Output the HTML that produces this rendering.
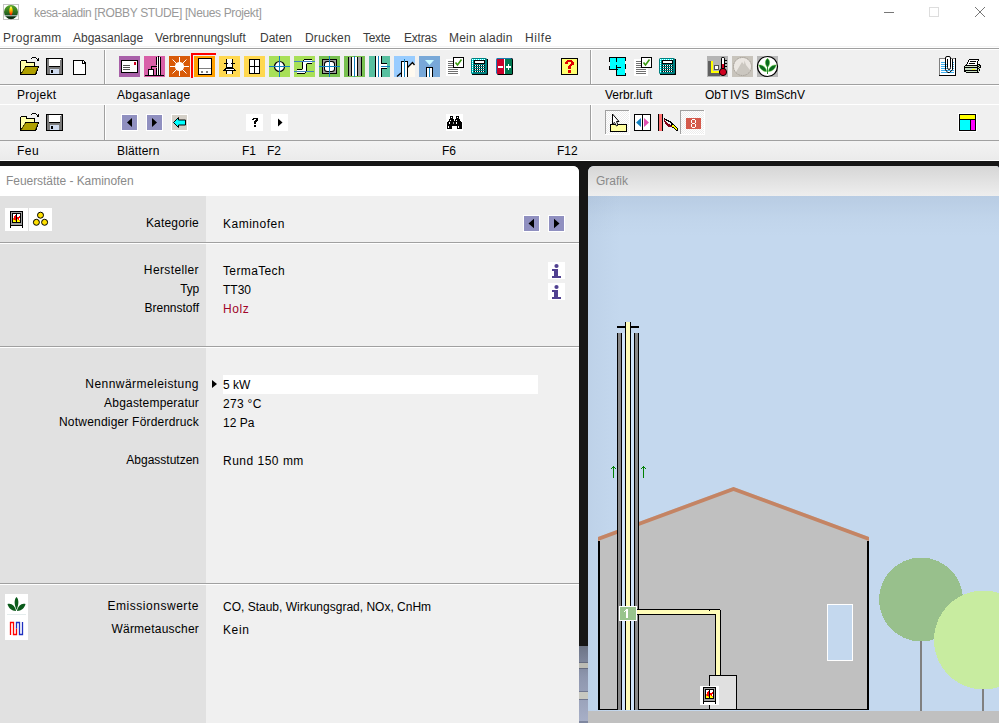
<!DOCTYPE html>
<html><head><meta charset="utf-8">
<style>
*{margin:0;padding:0;box-sizing:border-box}
html,body{width:999px;height:723px;overflow:hidden;background:#fff;font-family:"Liberation Sans",sans-serif;font-size:12px;color:#000}
.a{position:absolute}
.t{position:absolute;white-space:pre;line-height:14px;font-size:12px}
.hl{position:absolute;height:1px;background:#a0a0a0}
.wl{position:absolute;height:1px;background:#fff}
.vl{position:absolute;width:1px;background:#a0a0a0}
.lab{position:absolute;white-space:pre;right:800px;text-align:right;line-height:14px}
.val{position:absolute;white-space:pre;left:223px;line-height:14px}
svg{position:absolute;overflow:visible}
</style></head><body>
<!-- title bar -->
<div class="a" style="left:3px;top:4px;width:16px;height:16px;border:1px solid #c4c4c4;background:#fff"></div>
<svg style="left:4px;top:5px" width="14" height="14" viewBox="0 0 14 14">
<defs><linearGradient id="gg" x1="0" y1="0" x2="0" y2="1"><stop offset="0" stop-color="#5aa828"/><stop offset="0.7" stop-color="#1e5a1e"/></linearGradient>
<linearGradient id="fg" x1="0" y1="0" x2="0" y2="1"><stop offset="0" stop-color="#ffffa0"/><stop offset="0.35" stop-color="#ffe000"/><stop offset="0.65" stop-color="#ff8000"/><stop offset="1" stop-color="#ff0000"/></linearGradient></defs>
<circle cx="7" cy="7" r="7" fill="url(#gg)"/>
<path d="M0.8 10 H13.2 V11.6 H0.8Z" fill="#9aaca4"/>
<path d="M2 11.6 H12 Q10 14.2 7 14.2 Q4 14.2 2 11.6Z" fill="#0a2a12"/>
<path d="M7 1 C8.6 2.5 9 5 8.6 7.5 C8.4 9 7.6 10 7 10.3 C6.4 10 5.6 9 5.4 7.5 C5 5 5.4 2.5 7 1Z" fill="url(#fg)"/>
</svg>
<div class="t" style="left:34px;top:6px;color:#999;letter-spacing:-0.37px">kesa-aladin [ROBBY STUDE] [Neues Projekt]</div>
<div class="a" style="left:884px;top:12px;width:10px;height:1px;background:#777"></div>
<div class="a" style="left:929px;top:7px;width:10px;height:10px;border:1px solid #ddd"></div>
<svg style="left:975px;top:7px" width="10" height="10"><path d="M0 0L10 10M10 0L0 10" stroke="#777" stroke-width="1"/></svg>

<!-- menu -->
<div class="t" style="left:3px;top:31px;color:#3c3c3c;letter-spacing:0.33px">Programm</div>
<div class="t" style="left:73px;top:31px;color:#3c3c3c">Abgasanlage</div>
<div class="t" style="left:155px;top:31px;color:#3c3c3c">Verbrennungsluft</div>
<div class="t" style="left:260px;top:31px;color:#3c3c3c">Daten</div>
<div class="t" style="left:305px;top:31px;color:#3c3c3c;letter-spacing:0.15px">Drucken</div>
<div class="t" style="left:363px;top:31px;color:#3c3c3c;letter-spacing:-0.3px">Texte</div>
<div class="t" style="left:404px;top:31px;color:#3c3c3c;letter-spacing:-0.2px">Extras</div>
<div class="t" style="left:449px;top:31px;color:#3c3c3c;letter-spacing:0.2px">Mein aladin</div>
<div class="t" style="left:525px;top:31px;color:#3c3c3c;letter-spacing:0.6px">Hilfe</div>

<!-- toolbar area -->
<div class="a" style="left:0;top:46px;width:999px;height:1px;background:#f4f4f4"></div>
<div class="a" style="left:0;top:48px;width:999px;height:113px;background:#f0f0f0"></div>
<div class="hl" style="left:0;top:48px;width:999px"></div>
<div class="wl" style="left:0;top:49px;width:999px"></div>
<div class="hl" style="left:0;top:84px;width:999px"></div>
<div class="wl" style="left:0;top:85px;width:999px"></div>
<div class="wl" style="left:0;top:104px;width:999px"></div>
<div class="hl" style="left:0;top:140px;width:999px"></div>
<div class="a" style="left:0;top:141px;width:999px;height:19px;background:linear-gradient(#f3f3f3,#ebebeb)"></div>
<div class="wl" style="left:0;top:160px;width:999px"></div>
<div class="vl" style="left:104px;top:50px;height:34px"></div>
<div class="vl" style="left:590px;top:50px;height:34px"></div>
<div class="vl" style="left:104px;top:105px;height:35px"></div><div class="a" style="left:105px;top:105px;width:1px;height:35px;background:#fff"></div><div class="a" style="left:105px;top:50px;width:1px;height:34px;background:#fff"></div>
<div class="vl" style="left:590px;top:105px;height:35px"></div><div class="a" style="left:591px;top:105px;width:1px;height:35px;background:#fff"></div><div class="a" style="left:591px;top:50px;width:1px;height:34px;background:#fff"></div>

<div class="t" style="left:17px;top:88px;letter-spacing:0.3px">Projekt</div>
<div class="t" style="left:117px;top:88px;letter-spacing:0.3px">Abgasanlage</div>
<div class="t" style="left:605px;top:88px">Verbr.luft</div>
<div class="t" style="left:705px;top:88px">ObT</div><div class="t" style="left:730px;top:88px">IVS</div>
<div class="t" style="left:755px;top:88px">BImSchV</div>
<div class="t" style="left:17px;top:144px;letter-spacing:0.5px">Feu</div>
<div class="t" style="left:117px;top:144px;letter-spacing:0.15px">Blättern</div>
<div class="t" style="left:242px;top:144px">F1</div>
<div class="t" style="left:267px;top:144px">F2</div>
<div class="t" style="left:442px;top:144px">F6</div>
<div class="t" style="left:557px;top:144px">F12</div>


<!-- toolbar icons -->
<svg style="left:0;top:0" width="999" height="161" shape-rendering="crispEdges">
<!-- folder row1 -->
<g id="fold">
<path d="M20 61 H21 V60 H27 V62 H35 V66 H39 V67 L36 75 H20 Z" fill="#000"/>
<path d="M21 61 H26 V63 H34 V66 H25 V67 L21 73 Z" fill="#ffffa8"/>
<path d="M25 67 H38 L35 74 H21 Z" fill="#b0a000" shape-rendering="auto"/>
<path d="M25.5 67 L21 74" stroke="#000" stroke-width="1" stroke-dasharray="1 1" shape-rendering="auto"/>
<rect x="31" y="58" width="1" height="1" fill="#000"/><rect x="32" y="57" width="4" height="1" fill="#000"/><rect x="36" y="58" width="1" height="1" fill="#000"/>
<rect x="37" y="59" width="2" height="1" fill="#000"/><rect x="38" y="58" width="1" height="3" fill="#000"/><rect x="37" y="60" width="2" height="1" fill="#000"/>
</g>
<!-- floppy -->
<g id="flop">
<rect x="46" y="58" width="17" height="17" fill="#000"/>
<rect x="47" y="59" width="15" height="15" fill="#7a7a7a"/>
<rect x="49" y="59" width="11" height="7" fill="#fff"/>
<rect x="49" y="66" width="11" height="1" fill="#000"/>
<rect x="60" y="59" width="1" height="1" fill="#fff"/>
<rect x="50" y="69" width="9" height="5" fill="#d0dcf0"/>
<rect x="51" y="70" width="2" height="3" fill="#000"/>
</g>
<!-- new doc -->
<path d="M73 60 H83 L86 63 V75 H73 Z" fill="#000"/>
<path d="M74 61 H82 V64 H85 V74 H74 Z" fill="#fff"/>
<rect x="83" y="61" width="1" height="2" fill="#fff"/>
<!-- 1 purple envelope -->
<rect x="119" y="56" width="21" height="21" fill="#a860a8"/>
<rect x="121" y="60" width="17" height="13" fill="#000"/>
<rect x="122" y="61" width="15" height="11" fill="#fff"/>
<rect x="134" y="62" width="2" height="3" fill="#d00020"/>
<rect x="123" y="65" width="7" height="1" fill="#505050"/>
<rect x="123" y="67" width="7" height="1" fill="#505050"/>
<rect x="123" y="69" width="7" height="1" fill="#505050"/>
<!-- 2 pink stairs -->
<rect x="144" y="56" width="21" height="21" fill="#d860a8"/>
<rect x="145" y="75" width="19" height="1" fill="#000"/>
<rect x="148" y="69" width="6" height="7" fill="#000"/>
<rect x="149" y="70" width="4" height="5" fill="#fff"/>
<rect x="151" y="66" width="6" height="1" fill="#000"/>
<rect x="151" y="66" width="1" height="3" fill="#000"/>
<rect x="156" y="57" width="1" height="8" fill="#000"/>
<rect x="156" y="68" width="1" height="7" fill="#000"/>
<rect x="157" y="57" width="1" height="18" fill="#fff"/>
<rect x="158" y="56" width="1" height="19" fill="#000"/>
<rect x="159" y="57" width="1" height="18" fill="#fff"/>
<rect x="160" y="57" width="1" height="18" fill="#000"/>
<!-- 3 sun -->
<rect x="169" y="56" width="21" height="21" fill="#d85a08"/>
<g shape-rendering="auto" stroke="#fff" stroke-width="1">
<path d="M179.5 57 V76 M170 66.5 H189 M172.5 59.5 L186.5 73.5 M186.5 59.5 L172.5 73.5"/>
</g>
<circle cx="179.5" cy="66.5" r="4.6" fill="#fff" shape-rendering="auto"/>
<!-- 4 selected orange stove -->
<rect x="191" y="53" width="25" height="2" fill="#ff0000"/>
<rect x="191" y="53" width="2" height="25" fill="#ff0000"/>
<rect x="194" y="56" width="21" height="21" fill="#ffa000"/>
<rect x="198" y="58" width="14" height="17" fill="#000"/>
<rect x="199" y="59" width="12" height="15" fill="#fff"/>
<rect x="199" y="68" width="12" height="1" fill="#808080"/>
<rect x="201" y="71" width="2" height="2" fill="#808080"/>
<rect x="206" y="71" width="2" height="2" fill="#808080"/>
<!-- 5 yellow chimney joint -->
<rect x="219" y="56" width="21" height="21" fill="#ffd850"/>
<rect x="227" y="59" width="5" height="8" fill="#fff"/>
<rect x="226" y="59" width="1" height="9" fill="#000"/>
<rect x="232" y="59" width="1" height="9" fill="#000"/>
<rect x="226" y="67" width="7" height="1" fill="#000"/>
<rect x="224" y="63" width="4" height="1" fill="#000"/>
<rect x="231" y="63" width="4" height="1" fill="#000"/>
<path d="M225 68 H234 L236 71 H223 Z" fill="#000"/>
<path d="M226 69 H233 L234 70 H225 Z" fill="#fff"/>
<rect x="227" y="71" width="5" height="3" fill="#fff"/>
<rect x="226" y="71" width="1" height="3" fill="#000"/>
<rect x="232" y="71" width="1" height="3" fill="#000"/>
<!-- 6 yellow window -->
<rect x="244" y="56" width="21" height="21" fill="#ffd850"/>
<rect x="249" y="59" width="11" height="15" fill="#000"/>
<rect x="250" y="60" width="4" height="6" fill="#fff"/>
<rect x="255" y="60" width="4" height="6" fill="#fff"/>
<rect x="250" y="67" width="4" height="6" fill="#fff"/>
<rect x="255" y="67" width="4" height="6" fill="#fff"/>
<!-- 7 green crosshair circle -->
<rect x="269" y="56" width="21" height="21" fill="#a8e058"/>
<circle cx="279.5" cy="66.5" r="5" fill="#fff" stroke="#000" stroke-width="1.2" shape-rendering="auto"/>
<rect x="269" y="66" width="21" height="1" fill="#1080c0"/>
<rect x="279" y="56" width="1" height="21" fill="#1080c0"/>
<!-- 8 green S pipe -->
<rect x="294" y="56" width="21" height="21" fill="#a8e058"/>
<g fill="#fff"><rect x="304" y="60" width="8" height="3"/><rect x="303" y="61" width="3" height="10"/><rect x="297" y="70" width="8" height="3"/></g>
<g fill="#000">
<rect x="304" y="59" width="8" height="1"/><rect x="303" y="60" width="1" height="1"/>
<rect x="302" y="61" width="1" height="8"/><rect x="297" y="69" width="5" height="1"/>
<rect x="297" y="73" width="8" height="1"/><rect x="305" y="72" width="1" height="1"/>
<rect x="306" y="64" width="1" height="8"/><rect x="307" y="63" width="5" height="1"/>
</g>
<rect x="294" y="61" width="21" height="1" fill="#4080c0"/>
<rect x="294" y="71" width="20" height="1" fill="#4080c0"/>
<!-- 9 green square frame -->
<rect x="319" y="56" width="21" height="21" fill="#78c050"/>
<rect x="322" y="59" width="15" height="15" fill="#000"/>
<rect x="323" y="60" width="13" height="13" fill="#a0a0a0"/>
<rect x="324" y="61" width="11" height="11" rx="3" fill="#000" shape-rendering="auto"/>
<rect x="325" y="62" width="9" height="9" rx="2.5" fill="#fff" shape-rendering="auto"/>
<rect x="319" y="66" width="21" height="1" fill="#1080c0"/>
<rect x="329" y="56" width="1" height="21" fill="#1080c0"/>
<!-- 10 green stripes -->
<rect x="344" y="56" width="21" height="21" fill="#78c050"/>
<rect x="348" y="57" width="14" height="19" fill="#000"/>
<rect x="349" y="57" width="2" height="19" fill="#a0a0a0"/>
<rect x="352" y="57" width="5" height="19" fill="#fff"/>
<rect x="358" y="57" width="3" height="19" fill="#a0a0a0"/>
<rect x="354" y="56" width="1" height="21" fill="#1080c0"/>
<!-- 11 teal T -->
<rect x="369" y="56" width="21" height="21" fill="#58c0a0"/>
<rect x="375" y="56" width="7" height="21" fill="#000"/>
<rect x="376" y="56" width="5" height="21" fill="#fff"/>
<rect x="381" y="63" width="6" height="6" fill="#000"/>
<rect x="381" y="64" width="6" height="4" fill="#fff"/>
<rect x="378" y="56" width="1" height="21" fill="#1080c0"/>
<rect x="381" y="66" width="9" height="1" fill="#1080c0"/>
<!-- 12 light blue chimney roof -->
<rect x="394" y="56" width="21" height="21" fill="#98ccff"/>
<path d="M408 67 L413 62 L415 64 V77 H408 Z" fill="#fffaf0" shape-rendering="auto"/>
<path d="M407.5 67.5 L412.5 62.5 L414.5 65" fill="none" stroke="#000" stroke-width="1.3" shape-rendering="auto"/>
<path d="M397 76.5 L401 73" fill="none" stroke="#000" stroke-width="1.3" shape-rendering="auto"/>
<rect x="401" y="61" width="7" height="16" fill="#000"/>
<rect x="402" y="62" width="5" height="15" fill="#fff"/>
<rect x="404" y="59" width="1" height="18" fill="#1080c0"/>
<!-- 13 steel blue -->
<rect x="419" y="56" width="21" height="21" fill="#78a8d8"/>
<path d="M425 60 H434 L429.5 65 Z" fill="#c8f8ff" shape-rendering="auto"/>
<rect x="426" y="67" width="7" height="10" fill="#000"/>
<rect x="427" y="68" width="5" height="9" fill="#fff"/>
<rect x="429" y="68" width="1" height="9" fill="#1080c0"/>
<!-- 14 checklist -->
<rect x="446" y="59" width="14" height="17" fill="#fff"/>
<rect x="448" y="61" width="7" height="1" fill="#707070"/>
<rect x="448" y="63" width="7" height="1" fill="#707070"/>
<rect x="448" y="65" width="7" height="1" fill="#707070"/>
<rect x="448" y="67" width="7" height="1" fill="#707070"/>
<rect x="448" y="69" width="10" height="1" fill="#707070"/>
<rect x="448" y="71" width="10" height="1" fill="#707070"/>
<rect x="448" y="73" width="10" height="1" fill="#707070"/>
<rect x="453" y="57" width="11" height="11" fill="#000"/>
<rect x="454" y="58" width="9" height="9" fill="#fff"/>
<path d="M455.5 62.5 L457.5 65 L461.5 59.5" fill="none" stroke="#3a9a10" stroke-width="1.6" shape-rendering="auto"/>
<!-- 15 calculator -->
<rect x="472" y="59" width="16" height="16" fill="#000"/>
<rect x="471" y="58" width="16" height="16" rx="1.5" fill="#008080" shape-rendering="auto"/>
<rect x="472" y="59" width="13" height="1" fill="#00ffff"/><rect x="472" y="59" width="1" height="14" fill="#00ffff"/>
<rect x="472" y="59" width="1" height="1" fill="#fff"/>
<rect x="472" y="59" width="1" height="1" fill="#fff"/>
<rect x="474" y="59" width="1" height="1" fill="#fff"/>
<rect x="472" y="61" width="1" height="1" fill="#fff"/>
<rect x="476" y="59" width="1" height="1" fill="#fff"/>
<rect x="472" y="63" width="1" height="1" fill="#fff"/>
<rect x="478" y="59" width="1" height="1" fill="#fff"/>
<rect x="472" y="65" width="1" height="1" fill="#fff"/>
<rect x="480" y="59" width="1" height="1" fill="#fff"/>
<rect x="472" y="67" width="1" height="1" fill="#fff"/>
<rect x="482" y="59" width="1" height="1" fill="#fff"/>
<rect x="472" y="69" width="1" height="1" fill="#fff"/>
<rect x="484" y="59" width="1" height="1" fill="#fff"/>
<rect x="472" y="71" width="1" height="1" fill="#fff"/>
<rect x="474" y="60" width="11" height="4" fill="#000"/><rect x="475" y="61" width="9" height="2" fill="#fff"/>
<rect x="474" y="65" width="11" height="1" fill="#000"/>
<rect x="475" y="65" width="1" height="1" fill="#fff"/>
<rect x="477" y="65" width="1" height="1" fill="#fff"/>
<rect x="479" y="65" width="1" height="1" fill="#fff"/>
<rect x="481" y="65" width="1" height="1" fill="#fff"/>
<rect x="483" y="65" width="1" height="1" fill="#fff"/>
<rect x="474" y="67" width="11" height="1" fill="#000"/>
<rect x="475" y="67" width="1" height="1" fill="#fff"/>
<rect x="477" y="67" width="1" height="1" fill="#fff"/>
<rect x="479" y="67" width="1" height="1" fill="#fff"/>
<rect x="481" y="67" width="1" height="1" fill="#fff"/>
<rect x="483" y="67" width="1" height="1" fill="#fff"/>
<rect x="474" y="69" width="11" height="1" fill="#000"/>
<rect x="475" y="69" width="1" height="1" fill="#fff"/>
<rect x="477" y="69" width="1" height="1" fill="#fff"/>
<rect x="479" y="69" width="1" height="1" fill="#fff"/>
<rect x="481" y="69" width="1" height="1" fill="#fff"/>
<rect x="483" y="69" width="1" height="1" fill="#fff"/>
<rect x="474" y="71" width="11" height="1" fill="#000"/>
<rect x="475" y="71" width="1" height="1" fill="#fff"/>
<rect x="477" y="71" width="1" height="1" fill="#fff"/>
<rect x="479" y="71" width="1" height="1" fill="#fff"/>
<rect x="481" y="71" width="1" height="1" fill="#fff"/>
<rect x="483" y="71" width="1" height="1" fill="#fff"/>
<!-- 16 minus plus -->
<rect x="497" y="58" width="16" height="17" rx="1.5" fill="#000" shape-rendering="auto"/>
<rect x="496" y="58" width="16" height="16" rx="1.5" fill="#1a7ab0" shape-rendering="auto"/>
<rect x="497" y="59" width="7" height="15" fill="#c8002a"/>
<rect x="504" y="59" width="1" height="15" fill="#fff"/>
<rect x="505" y="59" width="7" height="15" fill="#007850"/>
<rect x="498" y="66" width="5" height="1.5" fill="#fff"/>
<rect x="506" y="66" width="5" height="1.5" fill="#fff"/>
<rect x="507.8" y="64" width="1.5" height="5.5" fill="#fff"/>
<!-- help -->
<rect x="561" y="58" width="17" height="17" fill="#000"/>
<rect x="562" y="59" width="15" height="15" fill="#ffff70"/>
<g fill="#e00000">
<rect x="567" y="60" width="5" height="1"/><rect x="566" y="61" width="7" height="1"/>
<rect x="565" y="62" width="3" height="2"/><rect x="571" y="62" width="3" height="2"/>
<rect x="570" y="64" width="4" height="1"/><rect x="569" y="65" width="3" height="1"/>
<rect x="568" y="66" width="3" height="3"/><rect x="568" y="70" width="3" height="3"/>
</g>
<!-- floor plan -->
<rect x="610" y="58" width="15" height="11" fill="#00ffff"/>
<rect x="617" y="58" width="8" height="17" fill="#00ffff"/>
<g fill="#000">
<rect x="609" y="57" width="17" height="1"/>
<rect x="609" y="57" width="1" height="5"/><rect x="609" y="66" width="1" height="4"/>
<rect x="609" y="69" width="9" height="1"/>
<rect x="625" y="57" width="1" height="4"/><rect x="625" y="64" width="1" height="5"/><rect x="625" y="73" width="1" height="3"/>
<rect x="616" y="75" width="10" height="1"/>
<rect x="616" y="69" width="1" height="7"/>
<rect x="616" y="57" width="1" height="5"/><rect x="616" y="65" width="1" height="5"/>
<rect x="617" y="67" width="4" height="1"/>
</g>
<rect x="617" y="68" width="1" height="1" fill="#00ffff"/>
<!-- checklist 2 -->
<rect x="634" y="59" width="14" height="17" fill="#fff"/>
<rect x="636" y="61" width="7" height="1" fill="#707070"/>
<rect x="636" y="63" width="7" height="1" fill="#707070"/>
<rect x="636" y="65" width="7" height="1" fill="#707070"/>
<rect x="636" y="67" width="7" height="1" fill="#707070"/>
<rect x="636" y="69" width="10" height="1" fill="#707070"/>
<rect x="636" y="71" width="10" height="1" fill="#707070"/>
<rect x="636" y="73" width="10" height="1" fill="#707070"/>
<rect x="641" y="57" width="11" height="11" fill="#000"/>
<rect x="642" y="58" width="9" height="9" fill="#fff"/>
<path d="M643.5 62.5 L645.5 65 L649.5 59.5" fill="none" stroke="#3a9a10" stroke-width="1.6" shape-rendering="auto"/>
<!-- calculator 2 -->
<rect x="660" y="59" width="16" height="16" fill="#000"/>
<rect x="659" y="58" width="16" height="16" rx="1.5" fill="#008080" shape-rendering="auto"/>
<rect x="660" y="59" width="13" height="1" fill="#00ffff"/><rect x="660" y="59" width="1" height="14" fill="#00ffff"/>
<rect x="660" y="59" width="1" height="1" fill="#fff"/>
<rect x="660" y="59" width="1" height="1" fill="#fff"/>
<rect x="662" y="59" width="1" height="1" fill="#fff"/>
<rect x="660" y="61" width="1" height="1" fill="#fff"/>
<rect x="664" y="59" width="1" height="1" fill="#fff"/>
<rect x="660" y="63" width="1" height="1" fill="#fff"/>
<rect x="666" y="59" width="1" height="1" fill="#fff"/>
<rect x="660" y="65" width="1" height="1" fill="#fff"/>
<rect x="668" y="59" width="1" height="1" fill="#fff"/>
<rect x="660" y="67" width="1" height="1" fill="#fff"/>
<rect x="670" y="59" width="1" height="1" fill="#fff"/>
<rect x="660" y="69" width="1" height="1" fill="#fff"/>
<rect x="672" y="59" width="1" height="1" fill="#fff"/>
<rect x="660" y="71" width="1" height="1" fill="#fff"/>
<rect x="662" y="60" width="11" height="4" fill="#000"/><rect x="663" y="61" width="9" height="2" fill="#fff"/>
<rect x="662" y="65" width="11" height="1" fill="#000"/>
<rect x="663" y="65" width="1" height="1" fill="#fff"/>
<rect x="665" y="65" width="1" height="1" fill="#fff"/>
<rect x="667" y="65" width="1" height="1" fill="#fff"/>
<rect x="669" y="65" width="1" height="1" fill="#fff"/>
<rect x="671" y="65" width="1" height="1" fill="#fff"/>
<rect x="662" y="67" width="11" height="1" fill="#000"/>
<rect x="663" y="67" width="1" height="1" fill="#fff"/>
<rect x="665" y="67" width="1" height="1" fill="#fff"/>
<rect x="667" y="67" width="1" height="1" fill="#fff"/>
<rect x="669" y="67" width="1" height="1" fill="#fff"/>
<rect x="671" y="67" width="1" height="1" fill="#fff"/>
<rect x="662" y="69" width="11" height="1" fill="#000"/>
<rect x="663" y="69" width="1" height="1" fill="#fff"/>
<rect x="665" y="69" width="1" height="1" fill="#fff"/>
<rect x="667" y="69" width="1" height="1" fill="#fff"/>
<rect x="669" y="69" width="1" height="1" fill="#fff"/>
<rect x="671" y="69" width="1" height="1" fill="#fff"/>
<rect x="662" y="71" width="11" height="1" fill="#000"/>
<rect x="663" y="71" width="1" height="1" fill="#fff"/>
<rect x="665" y="71" width="1" height="1" fill="#fff"/>
<rect x="667" y="71" width="1" height="1" fill="#fff"/>
<rect x="669" y="71" width="1" height="1" fill="#fff"/>
<rect x="671" y="71" width="1" height="1" fill="#fff"/>
<!-- ObT -->
<rect x="707" y="56" width="21" height="21" fill="#b4b4b4"/>
<rect x="708" y="61" width="12" height="15" fill="#606060"/>
<rect x="711" y="61" width="2" height="12" fill="#ffff00"/>
<rect x="711" y="71" width="9" height="2" fill="#ffff00"/>
<rect x="713" y="61" width="7" height="10" fill="#b4b4b4"/>
<rect x="714" y="65" width="5" height="5" fill="#505050"/>
<rect x="715" y="66" width="3" height="3" fill="#fff"/>
<rect x="721" y="57" width="4" height="13" rx="2" fill="#000" shape-rendering="auto"/>
<rect x="722" y="58" width="2" height="12" fill="#fff"/>
<rect x="722" y="64" width="2" height="6" fill="#d00020"/>
<circle cx="723" cy="72" r="3.6" fill="#d00020" stroke="#000" stroke-width="1" shape-rendering="auto"/>
<rect x="725" y="60" width="2" height="1" fill="#000"/><rect x="725" y="63" width="2" height="1" fill="#000"/><rect x="725" y="66" width="2" height="1" fill="#000"/>
<!-- IVS disabled -->
<rect x="732" y="56" width="21" height="21" fill="#c8c4bc"/>
<defs><clipPath id="ivc"><circle cx="742.5" cy="66.5" r="9"/></clipPath></defs>
<circle cx="742.5" cy="66.5" r="9" fill="#ebe7e2" shape-rendering="auto"/>
<g clip-path="url(#ivc)" shape-rendering="auto">
<path d="M733 76 L733 71 L736 72 L742 62 L744 64.5 L744.5 60.5 L746 65 L750 70 L752 71 V76 Z" fill="#cbc7c0"/>
</g>
<circle cx="742.5" cy="66.5" r="9" fill="none" stroke="#a09a92" stroke-width="1" stroke-dasharray="1.2 0.6" shape-rendering="auto"/>
<!-- BImSchV -->
<rect x="757" y="56" width="21" height="21" fill="#b8b8b8"/>
<circle cx="767.5" cy="66.5" r="10" fill="#fff" stroke="#000" stroke-width="1.2" shape-rendering="auto"/>
<g fill="#0a6a20" stroke="#60d030" stroke-width="0.5" shape-rendering="auto">
<path d="M767.5 58.3 C770.3 60.5 770.3 64.5 767.5 67.5 C764.7 64.5 764.7 60.5 767.5 58.3Z"/>
<path d="M758.8 65 C762.5 64.5 766.5 67.5 766.5 71.5 C762.5 71.5 759.8 68.5 758.8 65Z"/>
<path d="M776.2 65 C772.5 64.5 768.5 67.5 768.5 71.5 C772.5 71.5 775.2 68.5 776.2 65Z"/>
</g>
<rect x="767" y="66" width="1" height="8" fill="#2a8a30"/>
<!-- paperclip doc -->
<rect x="939" y="58" width="17" height="18" fill="#000"/>
<rect x="939" y="58" width="16" height="1" fill="#808080"/>
<rect x="939" y="58" width="1" height="17" fill="#808080"/>
<rect x="940" y="59" width="15" height="16" fill="#fff"/>
<g fill="#40b0f0">
<rect x="941" y="62" width="13" height="1"/><rect x="941" y="64" width="13" height="1"/><rect x="941" y="66" width="13" height="1"/><rect x="941" y="68" width="13" height="1"/><rect x="941" y="70" width="13" height="1"/><rect x="941" y="72" width="13" height="1"/>
</g>
<path d="M946 57 H951 V69 H947 Z M951 59 H952 V70 H951 Z" fill="#fff"/>
<g fill="none" stroke="#000" stroke-width="1" shape-rendering="auto">
<path d="M952.5 59 V69.8 L949.5 72.5 H947.8 L945.5 69.8 V58 Q945.5 56.5 947 56.5 H949 Q950.5 56.5 950.5 58 V67.5 Q950.5 69.5 949 69.5 Q947.5 69.5 947.5 67.5 V59"/>
</g>
<!-- printer -->
<path d="M968 60 H978 L976.5 65 H966 Z" fill="#fff" shape-rendering="auto"/>
<g fill="#000">
<rect x="969" y="59" width="10" height="1"/>
<rect x="968" y="60" width="1" height="2"/><rect x="967" y="62" width="1" height="2"/><rect x="966" y="64" width="1" height="1"/>
<rect x="978" y="59" width="1" height="2"/><rect x="977" y="61" width="1" height="3"/>
<rect x="970" y="61" width="6" height="1"/><rect x="969" y="63" width="6" height="1"/>
<rect x="965" y="65" width="12" height="1"/>
<rect x="964" y="66" width="1" height="6"/>
<rect x="965" y="67" width="12" height="1"/><rect x="965" y="70" width="12" height="1"/>
<rect x="966" y="72" width="12" height="1"/><rect x="965" y="71" width="1" height="1"/>
<rect x="977" y="64" width="3" height="1"/><rect x="980" y="65" width="1" height="3"/>
<rect x="977" y="65" width="1" height="7"/>
</g>
<rect x="965" y="66" width="12" height="1" fill="#c8dcc0"/>
<rect x="965" y="68" width="12" height="2" fill="#c8dcc0"/>
<rect x="972" y="69" width="3" height="1" fill="#ffff00"/>
<rect x="966" y="71" width="11" height="1" fill="#c8dcc0"/>
<g fill="#c8dcc0"><rect x="978" y="65" width="1" height="1"/><rect x="979" y="66" width="1" height="1"/><rect x="978" y="67" width="1" height="1"/><rect x="979" y="68" width="1" height="1"/><rect x="978" y="69" width="1" height="2"/><rect x="978" y="71" width="1" height="1"/></g>
<g fill="#000"><rect x="979" y="65" width="1" height="1"/><rect x="978" y="66" width="1" height="1"/><rect x="979" y="67" width="1" height="1"/><rect x="978" y="68" width="1" height="1"/><rect x="979" y="69" width="1" height="2"/><rect x="978" y="72" width="1" height="1"/></g>

<!-- row 2 -->
<g transform="translate(0,56)">
<path d="M20 61 H21 V60 H27 V62 H35 V66 H39 V67 L36 75 H20 Z" fill="#000"/>
<path d="M21 61 H26 V63 H34 V66 H25 V67 L21 73 Z" fill="#ffffa8"/>
<path d="M25 67 H38 L35 74 H21 Z" fill="#b0a000" shape-rendering="auto"/>
<path d="M25.5 67 L21 74" stroke="#000" stroke-width="1" stroke-dasharray="1 1" shape-rendering="auto"/>
<rect x="31" y="58" width="1" height="1" fill="#000"/><rect x="32" y="57" width="4" height="1" fill="#000"/><rect x="36" y="58" width="1" height="1" fill="#000"/>
<rect x="37" y="59" width="2" height="1" fill="#000"/><rect x="38" y="58" width="1" height="3" fill="#000"/><rect x="37" y="60" width="2" height="1" fill="#000"/>
<rect x="46" y="58" width="17" height="17" fill="#000"/>
<rect x="47" y="59" width="15" height="15" fill="#7a7a7a"/>
<rect x="49" y="59" width="11" height="7" fill="#fff"/>
<rect x="49" y="66" width="11" height="1" fill="#000"/>
<rect x="60" y="59" width="1" height="1" fill="#fff"/>
<rect x="50" y="69" width="9" height="5" fill="#d0dcf0"/>
<rect x="51" y="70" width="2" height="3" fill="#000"/>
</g>
<!-- nav buttons -->
<rect x="121" y="114" width="17" height="17" fill="#fff"/>
<rect x="122" y="115" width="15" height="15" fill="#9090c0"/>
<path d="M127 122.5 L132 118 V127 Z" fill="#000" shape-rendering="auto"/>
<rect x="146" y="114" width="17" height="17" fill="#fff"/>
<rect x="147" y="115" width="15" height="15" fill="#9090c0"/>
<path d="M157 122.5 L152 118 V127 Z" fill="#000" shape-rendering="auto"/>
<rect x="171" y="114" width="17" height="17" fill="#fff"/>
<rect x="172" y="115" width="15" height="15" fill="#d4d0c8"/>
<path d="M173.5 122.5 L178.5 117.5 V120 H185.5 V125 H178.5 V127.5 Z" fill="#00ffff" stroke="#000" stroke-width="1" shape-rendering="auto"/>
<!-- ? and play -->
<rect x="246" y="114" width="17" height="17" fill="#fff"/>
<g fill="#000"><rect x="253" y="118" width="5" height="1"/><rect x="252" y="119" width="2" height="1"/><rect x="256" y="119" width="2" height="1"/><rect x="255" y="120" width="3" height="1"/><rect x="254" y="121" width="3" height="1"/><rect x="254" y="122" width="2" height="2"/><rect x="254" y="125" width="2" height="2"/></g>
<rect x="271" y="114" width="17" height="17" fill="#fff"/>
<path d="M278 118.5 L282.5 122.5 L278 126.5 Z" fill="#000" shape-rendering="auto"/>
<!-- binoculars -->
<rect x="446" y="114" width="17" height="17" fill="#fff"/>
<g fill="#000">
<rect x="450" y="116" width="3" height="3"/><rect x="456" y="116" width="3" height="3"/>
<rect x="449" y="119" width="5" height="2"/><rect x="455" y="119" width="5" height="2"/>
<rect x="448" y="121" width="13" height="5"/><rect x="461" y="121" width="1" height="1" fill="#fff"/>
<rect x="447" y="122" width="5" height="7"/><rect x="457" y="122" width="5" height="7"/>
</g>
<g fill="#fff">
<rect x="451" y="117" width="1" height="1"/><rect x="457" y="117" width="1" height="1"/>
<rect x="450" y="120" width="1" height="1"/><rect x="456" y="120" width="1" height="1"/>
<rect x="449" y="122" width="1" height="2"/><rect x="456" y="122" width="1" height="2"/><rect x="453" y="122" width="1" height="2" fill="#999"/>
<rect x="448" y="126" width="1" height="2"/><rect x="458" y="126" width="1" height="2"/>
<rect x="452" y="126" width="5" height="3"/>
</g>
<!-- cursor pressed button -->
<rect x="605" y="110" width="25" height="25" fill="#fff"/>
<rect x="605" y="110" width="24" height="24" fill="#a0a0a0"/>
<defs><pattern id="dith" width="2" height="2" patternUnits="userSpaceOnUse"><rect width="2" height="2" fill="#fff"/><rect width="1" height="1" fill="#ececec"/><rect x="1" y="1" width="1" height="1" fill="#ececec"/></pattern></defs><rect x="606" y="111" width="23" height="23" fill="url(#dith)"/>
<rect x="610" y="124" width="17" height="8" fill="#000"/>
<rect x="611" y="125" width="15" height="6" fill="#ffffa0"/>
<path d="M612.5 114 V124 L614.5 122.5 L616.5 126 L618 125 L616.5 121.5 L619 121.5 Z" fill="#fff" stroke="#000" stroke-width="1" shape-rendering="auto"/>
<!-- split -->
<rect x="634" y="114" width="17" height="17" fill="#000"/>
<rect x="635" y="115" width="7" height="15" fill="#fff"/>
<rect x="643" y="115" width="7" height="15" fill="#fff"/>
<path d="M636 122.5 L641 118 V127 Z" fill="#1080c0" shape-rendering="auto"/>
<path d="M649 122.5 L644 118 V127 Z" fill="#e050b0" shape-rendering="auto"/>
<!-- pen -->
<rect x="658" y="114" width="5" height="17" fill="#000"/>
<rect x="659" y="114" width="3" height="17" fill="#ff7070"/>
<rect x="664" y="118" width="1" height="1" fill="#000"/>
<rect x="664" y="119" width="1" height="1" fill="#800018"/>
<rect x="665" y="119" width="2" height="1" fill="#000"/>
<rect x="664" y="120" width="1" height="1" fill="#800018"/>
<rect x="666" y="120" width="3" height="1" fill="#000"/>
<rect x="664" y="121" width="2" height="1" fill="#800018"/>
<rect x="668" y="121" width="3" height="1" fill="#000"/>
<rect x="665" y="122" width="2" height="1" fill="#800018"/>
<rect x="670" y="122" width="2" height="1" fill="#000"/>
<rect x="665" y="123" width="3" height="1" fill="#800018"/>
<rect x="671" y="123" width="2" height="1" fill="#000"/>
<rect x="666" y="124" width="4" height="1" fill="#800018"/>
<rect x="671" y="124" width="3" height="1" fill="#000"/>
<rect x="667" y="125" width="4" height="1" fill="#800018"/>
<rect x="671" y="125" width="1" height="1" fill="#000"/>
<rect x="672" y="125" width="2" height="1" fill="#ffff00"/>
<rect x="674" y="125" width="1" height="1" fill="#000"/>
<rect x="668" y="126" width="4" height="1" fill="#800018"/>
<rect x="672" y="126" width="3" height="1" fill="#ffff00"/>
<rect x="675" y="126" width="1" height="1" fill="#000"/>
<rect x="672" y="127" width="2" height="1" fill="#000"/>
<rect x="674" y="127" width="2" height="1" fill="#ffff00"/>
<rect x="676" y="127" width="1" height="1" fill="#000"/>
<rect x="674" y="128" width="1" height="1" fill="#000"/>
<rect x="675" y="128" width="2" height="1" fill="#ffff00"/>
<rect x="677" y="128" width="1" height="1" fill="#000"/>
<rect x="675" y="129" width="1" height="1" fill="#000"/>
<rect x="676" y="129" width="1" height="1" fill="#ffff00"/>
<rect x="677" y="129" width="1" height="1" fill="#000"/>
<rect x="676" y="130" width="2" height="1" fill="#000"/>
<!-- 8 pressed -->
<rect x="680" y="110" width="25" height="25" fill="#fff"/>
<rect x="680" y="110" width="24" height="24" fill="#a0a0a0"/>
<rect x="681" y="111" width="23" height="23" fill="url(#dith)"/>
<rect x="686" y="118" width="15" height="11" fill="#d45a4c"/>
<g fill="#fff"><rect x="692" y="119" width="3" height="1"/><rect x="691" y="120" width="1" height="3"/><rect x="695" y="120" width="1" height="3"/><rect x="692" y="123" width="3" height="1"/><rect x="691" y="124" width="1" height="3"/><rect x="695" y="124" width="1" height="3"/><rect x="692" y="127" width="3" height="1"/></g>
<!-- layout -->
<rect x="958" y="113" width="19" height="19" fill="#fff"/>
<rect x="959" y="114" width="17" height="17" fill="#000"/>
<rect x="960" y="115" width="15" height="4" fill="#ffff00"/>
<rect x="960" y="120" width="10" height="10" fill="#00ffff"/>
<rect x="971" y="120" width="4" height="10" fill="#ff00ff"/>
</svg>

<!-- black frame -->
<div class="a" style="left:0;top:161px;width:999px;height:562px;background:#161616"></div>

<!-- left panel -->
<div class="a" style="left:0;top:166px;width:579px;height:557px;background:#f0f0f0;border-radius:0 6px 0 0;overflow:hidden">
  <div class="a" style="left:0;top:0;width:579px;height:30px;background:#fff"></div>
  <div class="a" style="left:0;top:30px;width:206px;height:527px;background:#e1e1e1"></div>
</div>
<div class="t" style="left:6px;top:174px;color:#8a8a8a;letter-spacing:-0.05px">Feuerstätte - Kaminofen</div>
<div class="hl" style="left:0;top:242px;width:579px"></div>
<div class="wl" style="left:0;top:243px;width:579px"></div>
<div class="hl" style="left:0;top:346px;width:579px"></div>
<div class="wl" style="left:0;top:347px;width:579px"></div>
<div class="hl" style="left:0;top:583px;width:579px"></div>
<div class="wl" style="left:0;top:584px;width:579px"></div>

<div class="lab" style="top:216px;letter-spacing:0.19px">Kategorie</div>
<div class="val" style="top:217px;letter-spacing:0.5px">Kaminofen</div>
<div class="lab" style="top:263px;letter-spacing:0.38px">Hersteller</div>
<div class="val" style="top:264px;letter-spacing:0.37px">TermaTech</div>
<div class="lab" style="top:282px;letter-spacing:-0.2px">Typ</div>
<div class="val" style="top:283px">TT30</div>
<div class="lab" style="top:301px">Brennstoff</div>
<div class="val" style="top:302px;color:#a0062a;letter-spacing:0.6px">Holz</div>
<div class="a" style="left:223px;top:375px;width:315px;height:19px;background:#fff"></div>
<div class="lab" style="top:377px;letter-spacing:0.45px">Nennwärmeleistung</div>
<div class="val" style="top:378px">5 kW</div>
<div class="lab" style="top:396px;letter-spacing:0.19px">Abgastemperatur</div>
<div class="val" style="top:397px;letter-spacing:0.3px">273 °C</div>
<div class="lab" style="top:415px;letter-spacing:0.2px">Notwendiger Förderdruck</div>
<div class="val" style="top:416px">12 Pa</div>
<div class="lab" style="top:453px">Abgasstutzen</div>
<div class="val" style="top:454px;letter-spacing:0.5px">Rund 150 mm</div>
<div class="lab" style="top:599px;letter-spacing:0.54px">Emissionswerte</div>
<div class="val" style="top:600px">CO, Staub, Wirkungsgrad, NOx, CnHm</div>
<div class="lab" style="top:622px;letter-spacing:0.22px">Wärmetauscher</div>
<div class="val" style="top:623px;letter-spacing:0.6px">Kein</div>

<!-- right panel -->
<div class="a" style="left:588px;top:166px;width:411px;height:557px;background:#c4d8ee;border-radius:6px 3px 0 0;overflow:hidden">
  <div class="a" style="left:0;top:0;width:411px;height:30px;background:linear-gradient(#d6d6d6,#eeeeee)"></div>
</div>
<div class="t" style="left:596px;top:174px;color:#8a8a8a">Grafik</div>


<!-- desktop strip -->
<div class="a" style="left:579px;top:646px;width:9px;height:77px;background:linear-gradient(#6c7486,#8e96ae 40%,#a8b0c8)"></div>
<div class="a" style="left:579px;top:662px;width:9px;height:1px;background:#666c80"></div>
<div class="a" style="left:579px;top:663px;width:9px;height:5px;background:#bcbcb4"></div>
<div class="a" style="left:579px;top:668px;width:9px;height:1px;background:#666c80"></div>
<div class="a" style="left:579px;top:691px;width:9px;height:1px;background:#727890"></div>
<div class="a" style="left:579px;top:692px;width:9px;height:7px;background:#c8c8c0"></div>
<div class="a" style="left:579px;top:699px;width:9px;height:1px;background:#727890"></div>
<div class="a" style="left:579px;top:721px;width:9px;height:2px;background:#8088a0"></div>

<!-- graphic -->
<div class="a" style="left:588px;top:196px;width:411px;height:40px;background:linear-gradient(rgba(90,110,140,0.11),rgba(90,110,140,0.03) 55%,rgba(90,110,140,0))"></div>
<div class="a" style="left:588px;top:196px;width:32px;height:527px;background:linear-gradient(90deg,rgba(90,110,140,0.06),rgba(90,110,140,0))"></div>
<svg style="left:588px;top:196px" width="411" height="527" viewBox="588 196 411 527" shape-rendering="crispEdges">
<!-- trees -->
<circle cx="921" cy="599.5" r="42" fill="#98c08c" shape-rendering="crispEdges"/>
<rect x="920" y="641" width="2" height="70" fill="#808080"/>
<circle cx="983.5" cy="640" r="49.5" fill="#c8eca0" shape-rendering="crispEdges"/>
<rect x="982" y="689" width="2" height="22" fill="#808080"/>
<!-- ground -->
<rect x="588" y="711" width="411" height="12" fill="#c0c0c0"/>
<!-- house -->
<path d="M598 537 L733.5 487 L869 537 V710 H598 Z" fill="#c0c0c0" shape-rendering="auto"/>
<path d="M598 537 L733.5 487 L869 537 V541 L733.5 491 L598 541 Z" fill="#c48464" shape-rendering="auto"/>
<rect x="598" y="541" width="2" height="169" fill="#000"/>
<rect x="867" y="541" width="2" height="169" fill="#000"/>
<rect x="598" y="709" width="271" height="1" fill="#000"/>
<!-- window -->
<rect x="827" y="604" width="26" height="57" fill="#fff"/>
<rect x="828" y="605" width="24" height="55" fill="#c4d8ee"/>
<!-- chimney -->
<rect x="617" y="333" width="5" height="377" fill="#000"/>
<rect x="618" y="333" width="3" height="377" fill="#888"/>
<rect x="634" y="333" width="5" height="377" fill="#000"/>
<rect x="635" y="333" width="3" height="377" fill="#888"/>
<rect x="622" y="333" width="3" height="377" fill="#d0e4fa"/>
<rect x="631" y="333" width="3" height="377" fill="#d0e4fa"/>
<rect x="625" y="322" width="6" height="388" fill="#000"/>
<rect x="626" y="322" width="4" height="388" fill="#fffcb8"/>
<rect x="617" y="326" width="22" height="2" fill="#000"/>
<rect x="626" y="326" width="4" height="2" fill="#fffcb8"/>
<!-- arrows -->
<g fill="#008000">
<rect x="613" y="466" width="1" height="12"/><rect x="612" y="467" width="3" height="1"/><rect x="611" y="468" width="1" height="1"/><rect x="615" y="468" width="1" height="1"/>
<rect x="643" y="466" width="1" height="12"/><rect x="642" y="467" width="3" height="1"/><rect x="641" y="468" width="1" height="1"/><rect x="645" y="468" width="1" height="1"/>
</g>
<!-- connector -->
<path d="M637 609 H720 V610 H721 V675 H715 V615 H637 Z" fill="#000"/>
<path d="M637 610 H720 V675 H716 V614 H637 Z" fill="#fffcb8"/>
<rect x="709" y="610" width="1" height="1" fill="#000"/>
<!-- stove -->
<rect x="709" y="675" width="28" height="35" fill="#000"/>
<rect x="710" y="676" width="26" height="33" fill="#e0e0e0"/>
<rect x="700" y="686" width="19" height="19" fill="#fff"/>
<g transform="translate(703,687)"><use href="#stv"/></g>
<!-- label 1 -->
<rect x="619" y="606" width="18" height="15" fill="#fff"/>
<rect x="620" y="607" width="16" height="13" fill="#98c48c"/>
<g fill="#fff"><rect x="626" y="609" width="2" height="9"/><rect x="625" y="610" width="1" height="1"/><rect x="624" y="611" width="1" height="1"/></g>
</svg>
<svg width="0" height="0" style="position:absolute">
<defs>
<g id="stv" shape-rendering="crispEdges">
<rect x="0" y="0" width="13" height="15" fill="#000"/>
<rect x="1" y="1" width="11" height="13" fill="#a0a0a0"/>
<rect x="2" y="2" width="9" height="10" fill="#000"/>
<rect x="3" y="3" width="7" height="8" fill="#fff"/>
<rect x="6" y="3" width="1" height="8" fill="#000"/>
<rect x="5" y="4" width="1" height="1" fill="#ff0000"/><rect x="4" y="5" width="1" height="1" fill="#ff0000"/><rect x="5" y="5" width="1" height="1" fill="#ff0000"/><rect x="4" y="6" width="1" height="1" fill="#ff0000"/><rect x="5" y="6" width="1" height="1" fill="#ff0000"/><rect x="3" y="7" width="1" height="1" fill="#ff8000"/><rect x="4" y="7" width="1" height="1" fill="#ff0000"/><rect x="5" y="7" width="1" height="1" fill="#ff0000"/><rect x="3" y="8" width="1" height="1" fill="#ff8000"/><rect x="4" y="8" width="1" height="1" fill="#ff0000"/><rect x="5" y="8" width="1" height="1" fill="#ff0000"/><rect x="3" y="9" width="1" height="1" fill="#ffff00"/><rect x="4" y="9" width="1" height="1" fill="#ffff00"/><rect x="5" y="9" width="1" height="1" fill="#ff8000"/><rect x="3" y="10" width="1" height="1" fill="#ffff00"/><rect x="4" y="10" width="1" height="1" fill="#ffff00"/><rect x="5" y="10" width="1" height="1" fill="#ffff00"/><rect x="9" y="5" width="1" height="1" fill="#ff0000"/><rect x="7" y="6" width="1" height="1" fill="#ff0000"/><rect x="8" y="6" width="1" height="1" fill="#ff0000"/><rect x="9" y="6" width="1" height="1" fill="#ff0000"/><rect x="7" y="7" width="1" height="1" fill="#ff0000"/><rect x="8" y="7" width="1" height="1" fill="#ff0000"/><rect x="7" y="8" width="1" height="1" fill="#ffff00"/><rect x="8" y="8" width="1" height="1" fill="#ff0000"/><rect x="7" y="9" width="1" height="1" fill="#ffff00"/><rect x="8" y="9" width="1" height="1" fill="#ffff00"/><rect x="9" y="9" width="1" height="1" fill="#ff8000"/><rect x="7" y="10" width="1" height="1" fill="#ffff00"/><rect x="8" y="10" width="1" height="1" fill="#ffff00"/><rect x="9" y="10" width="1" height="1" fill="#ffff00"/>
<rect x="0" y="15" width="1" height="2" fill="#000"/>
<rect x="12" y="15" width="1" height="2" fill="#000"/>
</g>
</defs>
</svg>

<!-- panel icons -->
<div class="a" style="left:5px;top:208px;width:23px;height:23px;background:#fff"></div>
<div class="a" style="left:29px;top:208px;width:23px;height:23px;background:#fff"></div>
<svg style="left:0;top:0" width="60" height="700" shape-rendering="crispEdges">
<g transform="translate(10,211)"><use href="#stv"/></g>
<g fill="#ffe000" stroke="#000" stroke-width="1" shape-rendering="auto">
<circle cx="40.5" cy="215.2" r="3"/>
<circle cx="36.4" cy="222.3" r="3"/>
<circle cx="44.6" cy="222.3" r="3"/>
</g>
</svg>
<div class="a" style="left:5px;top:594px;width:23px;height:46px;background:#fff"></div>
<svg style="left:0;top:0" width="60" height="700">
<rect x="7" y="614" width="19" height="1" fill="#e4ecec"/>
<g fill="#0a5a1a">
<path d="M16.5 597 C19 599.5 19 604 16.5 610 C14 604 14 599.5 16.5 597Z"/>
<path d="M7.5 604 C11 602.5 15.5 606 16 611 C11.5 611 8.5 608 7.5 604Z"/>
<path d="M25.5 604 C22 602.5 17.5 606 17 611 C21.5 611 24.5 608 25.5 604Z"/>
</g>
<path d="M10.5 635 V622.5 H13.5 V634.5 H16.5 V628.5" fill="none" stroke="#ff0000" stroke-width="1.3"/>
<path d="M16.5 628.5 V622.5 H19.5 V634.5 H22.5 V622" fill="none" stroke="#2030c0" stroke-width="1.3"/>
</svg>
<!-- right side panel buttons -->
<svg style="left:0;top:0" width="999" height="723" shape-rendering="crispEdges">
<rect x="523" y="215" width="17" height="17" fill="#fff"/>
<rect x="524" y="216" width="15" height="15" fill="#9090c0"/>
<path d="M528.5 223.5 L534 218.8 V228.2 Z" fill="#000" shape-rendering="auto"/>
<rect x="548" y="215" width="17" height="17" fill="#fff"/>
<rect x="549" y="216" width="15" height="15" fill="#9090c0"/>
<path d="M559.5 223.5 L554 218.8 V228.2 Z" fill="#000" shape-rendering="auto"/>
<rect x="548" y="262" width="17" height="17" fill="#fff"/>
<rect x="548" y="283" width="17" height="17" fill="#fff"/>
<g fill="#504090">
<circle cx="556.5" cy="266" r="2.1" shape-rendering="auto"/>
<rect x="552" y="269" width="6" height="2"/><rect x="554" y="269" width="4" height="7"/><rect x="552" y="276" width="9" height="2"/>
<circle cx="556.5" cy="287" r="2.1" shape-rendering="auto"/>
<rect x="552" y="290" width="6" height="2"/><rect x="554" y="290" width="4" height="7"/><rect x="552" y="297" width="9" height="2"/>
</g>
<path d="M212 380 L217 384 L212 388 Z" fill="#000" shape-rendering="auto"/>
</svg>

</body></html>
